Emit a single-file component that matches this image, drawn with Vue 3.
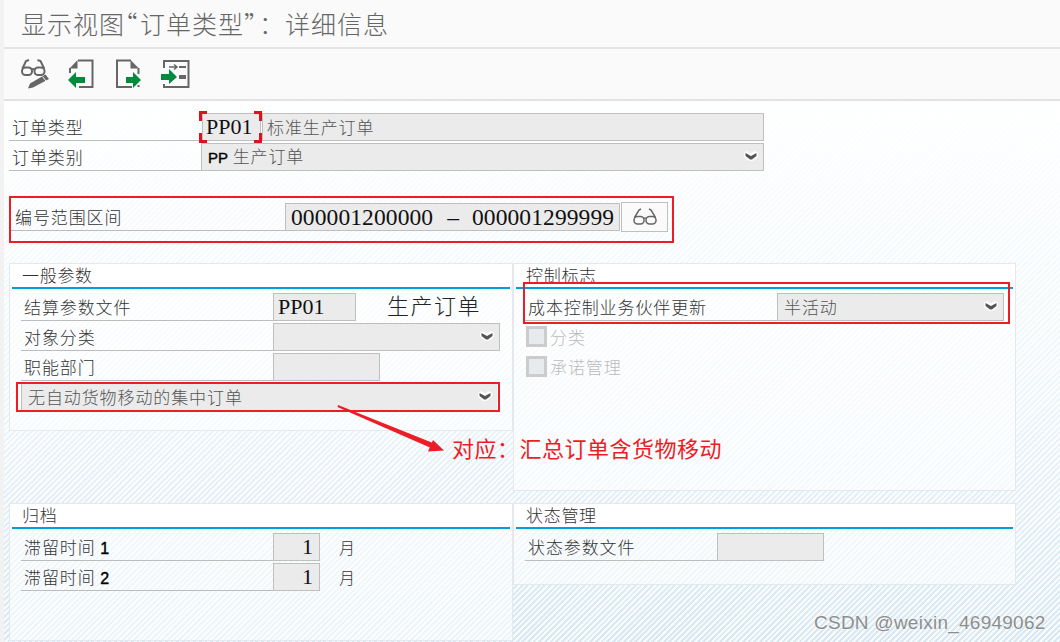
<script setup>
const chevron = 'M0 2 L3 0 L7 2.500 L11 0 L14 2 L14 6 L8.500 10 L5.500 10 L0 6 Z'
const chevronInner = 'M1.500 2 L7 5 L12.500 2 L12.500 5 L8 8.500 H6 L1.500 5 Z'
</script>

<template>
  <div class="page">
    <header class="title-bar">
      <h1>显示视图<span class="q">“</span>订单类型<span class="q">”</span>：详细信息</h1>
    </header>
    <nav class="toolbar">
      <svg class="tool" viewBox="0 0 30 30">
        <g fill="none" stroke="#666" stroke-width="2">
          <rect x="2" y="8.500" width="10" height="7.500" rx="3.500" />
          <rect x="14.500" y="8.500" width="10" height="7.500" rx="3.500" />
          <path d="M12 10.500 Q13.200 9.500 14.500 10.500 M2.500 9.500 L6 2 L9 1 M24.200 9.500 L20.500 2 L17.500 1" />
        </g>
        <path d="M25.500 15.500 L29 20 L13 28.500 L8 29.500 L10 24.500 Z" fill="#666" />
        <path d="M22.500 17.500 L26 22" stroke="#fafafa" stroke-width="1" />
      </svg>
      <svg class="tool" viewBox="0 0 30 30">
        <path d="M11 1.500 H25.500 V28 H12 M3 9 V14" fill="none" stroke="#666" stroke-width="2" />
        <path d="M10.500 1 V9.500 H2.500 Z" fill="#666" />
        <path d="M1 21 L9 13 V18 H18 V24 H9 V29 Z" fill="#008c3c" />
      </svg>
      <svg class="tool" viewBox="0 0 30 30">
        <path d="M17 1.500 H3 V28 H18 M24.500 9 V15 M24.500 26 V28" fill="none" stroke="#666" stroke-width="2" />
        <path d="M16.500 1 L25 9.500 H16.500 Z" fill="#666" />
        <path d="M27 21 L19 13 V18 H12 V24 H19 V29 Z" fill="#008c3c" />
      </svg>
      <svg class="tool" viewBox="0 0 30 30">
        <path d="M3 9 V2 H27.500 V28 H3 V25" fill="none" stroke="#666" stroke-width="2" />
        <path d="M8 8 H15 M13 5.500 L16 8 L13 10.500" fill="none" stroke="#666" stroke-width="1.500" />
        <path d="M18 7 H25 V9 H18 Z M18 16 H25 V20 H18 Z" fill="#666" />
        <path d="M0 15 H8 V10 L16 18 L8 25 V21 H0 Z" fill="#008c3c" />
      </svg>
    </nav>

    <main class="content">
      <div class="row top-row">
        <label class="lab top-lab">订单类型</label>
        <div class="field val code">PP01</div>
        <div class="field desc">标准生产订单</div>
      </div>
      <div class="row top-row">
        <label class="lab top-lab select-lab">订单类别</label>
        <div class="field select wide">
          <span><b class="pp">PP</b> 生产订单</span>
          <svg class="chev" viewBox="0 0 14 10"><path :d="chevron" fill="#fff" /><path :d="chevronInner" fill="#555" /></svg>
        </div>
      </div>

      <div class="row range-row">
        <label class="lab range-lab">编号范围区间</label>
        <div class="field val range">000001200000&nbsp;&nbsp;<span class="dash">–</span>&nbsp;&nbsp;000001299999</div>
        <button class="glass-btn">
          <svg width="26" height="18" viewBox="0 0 26 18">
            <g fill="none" stroke="#666" stroke-width="1.500">
              <rect x="2" y="8.500" width="10" height="7.500" rx="3.500" />
              <rect x="14" y="8.500" width="10" height="7.500" rx="3.500" />
              <path d="M12 10.500 Q13 9.500 14 10.500 M2.500 9.500 L7 2 L9 1 M23.500 9.500 L19 2 L17 1" />
            </g>
          </svg>
        </button>
      </div>

      <div class="panels">
        <section class="panel general">
          <div class="head"><h2>一般参数</h2></div>
          <div class="row body-row">
            <label class="lab body-lab">结算参数文件</label>
            <div class="field val file">PP01</div>
            <span class="big-note">生产订单</span>
          </div>
          <div class="row body-row">
            <label class="lab body-lab">对象分类</label>
            <div class="field select obj">
              <span></span>
              <svg class="chev" viewBox="0 0 14 10"><path :d="chevron" fill="#fff" /><path :d="chevronInner" fill="#555" /></svg>
            </div>
          </div>
          <div class="row body-row">
            <label class="lab body-lab">职能部门</label>
            <div class="field dept"></div>
          </div>
          <div class="row body-row">
            <div class="field select collect">
              <span>无自动货物移动的集中订单</span>
              <svg class="chev" viewBox="0 0 14 10"><path :d="chevron" fill="#fff" /><path :d="chevronInner" fill="#555" /></svg>
            </div>
          </div>
        </section>

        <section class="panel control">
          <div class="head"><h2>控制标志</h2></div>
          <div class="row body-row">
            <label class="lab body-lab">成本控制业务伙伴更新</label>
            <div class="field select obj">
              <span>半活动</span>
              <svg class="chev" viewBox="0 0 14 10"><path :d="chevron" fill="#fff" /><path :d="chevronInner" fill="#555" /></svg>
            </div>
          </div>
          <div class="check"><i></i>分类</div>
          <div class="check"><i></i>承诺管理</div>
        </section>

        <section class="panel archive">
          <div class="head"><h2>归档</h2></div>
          <div class="row body-row">
            <label class="lab body-lab">滞留时间 <b>1</b></label>
            <div class="field val num">1</div>
            <span class="unit">月</span>
          </div>
          <div class="row body-row">
            <label class="lab body-lab">滞留时间 <b>2</b></label>
            <div class="field val num">1</div>
            <span class="unit">月</span>
          </div>
        </section>

        <section class="panel status">
          <div class="head"><h2>状态管理</h2></div>
          <div class="row body-row">
            <label class="lab status-lab">状态参数文件</label>
            <div class="field status-field"></div>
          </div>
        </section>
      </div>
    </main>

    <div class="mark bracket"></div>
    <div class="mark box-range"></div>
    <div class="mark box-control"></div>
    <div class="mark box-collect"></div>
    <svg class="arrow" width="120" height="60" viewBox="0 0 120 60">
      <path d="M1 0 L0.500 2 L94 43 L96 38 Z" fill="#ee1c25" />
      <path d="M107 45.500 L96 35 L91 46.500 Z" fill="#ee1c25" />
    </svg>
    <div class="note">对应：汇总订单含货物移动</div>
    <div class="watermark">CSDN @weixin_46949062</div>
  </div>
</template>

<style scoped>
.page {
  position: relative;
  width: 1060px;
  height: 642px;
  overflow: hidden;
  box-sizing: border-box;
  padding-left: 4px;
  font-family: "Noto Sans CJK SC", sans-serif;
  font-weight: 300;
  color: #333;
  background: #f2f2f2;
}
.title-bar {
  height: 47px;
  background: #fafafa;
  border-bottom: 2px solid #e4e4e4;
  box-sizing: content-box;
  display: flex;
  align-items: center;
  padding-left: 17px;
}
h1 {
  margin: 0;
  font-size: 25px;
  line-height: 45px;
  font-weight: 300;
  letter-spacing: 1px;
  color: #666;
  white-space: nowrap;
}
.q {
  font-feature-settings: "halt";
  letter-spacing: 2.500px;
}
.toolbar {
  height: 52px;
  box-sizing: border-box;
  background: #fafafa;
  border-bottom: 2px solid #e2e2e2;
  display: flex;
  gap: 17px;
  padding: 10px 0 0 16px;
}
.tool {
  width: 30px;
  height: 30px;
}
.content {
  height: 541px;
  box-sizing: border-box;
  padding: 12px 0 0 5px;
  background:
    linear-gradient(to bottom, rgba(255, 255, 255, 0.97) 0, rgba(255, 255, 255, 0.6) 55%, rgba(255, 255, 255, 0.05) 100%),
    repeating-linear-gradient(135deg, #d6e7f1 0, #d6e7f1 2px, #f7fbfd 2px, #f7fbfd 4px);
}
.row {
  display: flex;
  height: 28px;
  margin-bottom: 2px;
}
.lab {
  box-sizing: border-box;
  height: 28px;
  border-bottom: 1px solid #bcbcbc;
  font-size: 17px;
  letter-spacing: 0.9px;
  line-height: 28px;
  white-space: nowrap;
}
.lab b, .select b {
  font-family: "Liberation Sans", sans-serif;
  font-size: 16px;
  font-weight: 400;
  color: #000;
  -webkit-text-stroke: 0.4px #000;
}
.select b.pp {
  font-size: 15px;
  letter-spacing: 0;
}
.top-lab {
  width: 193px;
  padding-left: 3px;
}
.select-lab {
  width: 192px;
}
.field {
  box-sizing: border-box;
  height: 28px;
  background: #ebebeb;
  border: 1px solid #bfbfbf;
  font-size: 17px;
  line-height: 26px;
  color: #555;
  letter-spacing: 0.9px;
  white-space: nowrap;
}
.val {
  font-family: "Liberation Serif", serif;
  font-weight: 400;
  color: #111;
  font-size: 22px;
  letter-spacing: 0;
}
.code {
  width: 59px;
  padding-left: 3px;
  margin-right: 1px;
}
.desc {
  width: 502px;
  padding-left: 4px;
}
.select {
  display: flex;
  align-items: center;
  justify-content: space-between;
  padding: 0 5px 0 6px;
}
.wide {
  width: 563px;
}
.chev {
  flex: none;
  width: 14px;
  height: 10px;
  margin-bottom: 2px;
}
.range-row {
  margin: 32px 0 0 1px;
  height: 28px;
  align-items: flex-start;
}
.range-lab {
  width: 275px;
  padding-left: 5px;
}
.range {
  width: 335px;
  padding-left: 5px;
  font-size: 23.500px;
  letter-spacing: 0.1px;
}
.dash {
  margin: 0 1px 0 2px;
}
.glass-btn {
  box-sizing: border-box;
  width: 47px;
  height: 30px;
  margin: -1px 0 0 1px;
  padding: 0;
  background: #fafafa;
  border: 1px solid #bfbfbf;
  display: flex;
  align-items: center;
  justify-content: center;
}
.panels {
  display: grid;
  grid-template-columns: 504px 503px;
  grid-template-rows: 228px 138px;
  row-gap: 12px;
  margin-top: 32px;
}
.panel {
  box-sizing: border-box;
  border: 1px solid #e3e9ee;
  background: rgba(255, 255, 255, 0.55);
}
.general {
  height: 168px;
}
.status {
  height: 82px;
}
.head {
  height: 25px;
  background: #fff;
  padding: 0 2px;
  margin-bottom: 4px;
}
h2 {
  box-sizing: border-box;
  height: 25px;
  margin: 0;
  padding-left: 10px;
  border-bottom: 2px solid #009de0;
  font-size: 17px;
  font-weight: 300;
  letter-spacing: 0.7px;
  line-height: 21px;
}
.body-row {
  padding-left: 11px;
}
.body-lab {
  width: 252px;
  padding-left: 3px;
}
.file {
  width: 83px;
  padding-left: 4px;
}
.big-note {
  margin-left: 31px;
  font-size: 22px;
  line-height: 22px;
  letter-spacing: 1.500px;
  color: #222;
}
.obj {
  width: 227px;
}
.dept {
  width: 107px;
}
.collect {
  width: 476px;
  height: 27px;
  border-width: 0 0 0 1px;
}
.check {
  display: flex;
  align-items: center;
  gap: 3px;
  height: 21px;
  margin: 5px 0 9px 12px;
  font-size: 17px;
  letter-spacing: 0.9px;
  color: #bbb;
}
.check i {
  box-sizing: border-box;
  width: 21px;
  height: 21px;
  border: 3px solid #ccc;
  background: #e8ebee;
}
.num {
  width: 47px;
  padding-right: 6px;
  text-align: right;
}
.unit {
  margin-left: 19px;
  font-size: 16px;
  line-height: 28px;
}
.status-lab {
  width: 192px;
  padding-left: 3px;
}
.status-field {
  width: 107px;
}
.mark {
  position: absolute;
  box-sizing: border-box;
  border: 2px solid #ee1c25;
}
.box-range {
  left: 9px;
  top: 196px;
  width: 665px;
  height: 47px;
}
.box-control {
  left: 523px;
  top: 282px;
  width: 487px;
  height: 42px;
}
.box-collect {
  left: 16px;
  top: 382px;
  width: 484px;
  height: 30px;
}
.bracket {
  left: 199px;
  top: 111px;
  width: 63px;
  height: 32px;
  border: 0;
  background:
    linear-gradient(#d8141c, #d8141c) 0 0 / 8px 3px no-repeat,
    linear-gradient(#d8141c, #d8141c) 0 0 / 3px 10px no-repeat,
    linear-gradient(#d8141c, #d8141c) 100% 0 / 8px 3px no-repeat,
    linear-gradient(#d8141c, #d8141c) 100% 0 / 3px 10px no-repeat,
    linear-gradient(#d8141c, #d8141c) 0 100% / 8px 3px no-repeat,
    linear-gradient(#d8141c, #d8141c) 0 100% / 3px 10px no-repeat,
    linear-gradient(#d8141c, #d8141c) 100% 100% / 8px 3px no-repeat,
    linear-gradient(#d8141c, #d8141c) 100% 100% / 3px 10px no-repeat;
}
.arrow {
  position: absolute;
  left: 337px;
  top: 405px;
}
.note {
  position: absolute;
  left: 452px;
  top: 430px;
  font-size: 22px;
  line-height: 34px;
  font-weight: 400;
  letter-spacing: 0.5px;
  color: #ee1c25;
  white-space: nowrap;
}
.watermark {
  position: absolute;
  left: 814px;
  top: 611px;
  font-family: "Liberation Sans", sans-serif;
  font-size: 19px;
  font-weight: 400;
  line-height: 24px;
  letter-spacing: 0.25px;
  color: #8d8d8d;
  text-shadow: 0 0 2px #fff;
  white-space: nowrap;
}
</style>
